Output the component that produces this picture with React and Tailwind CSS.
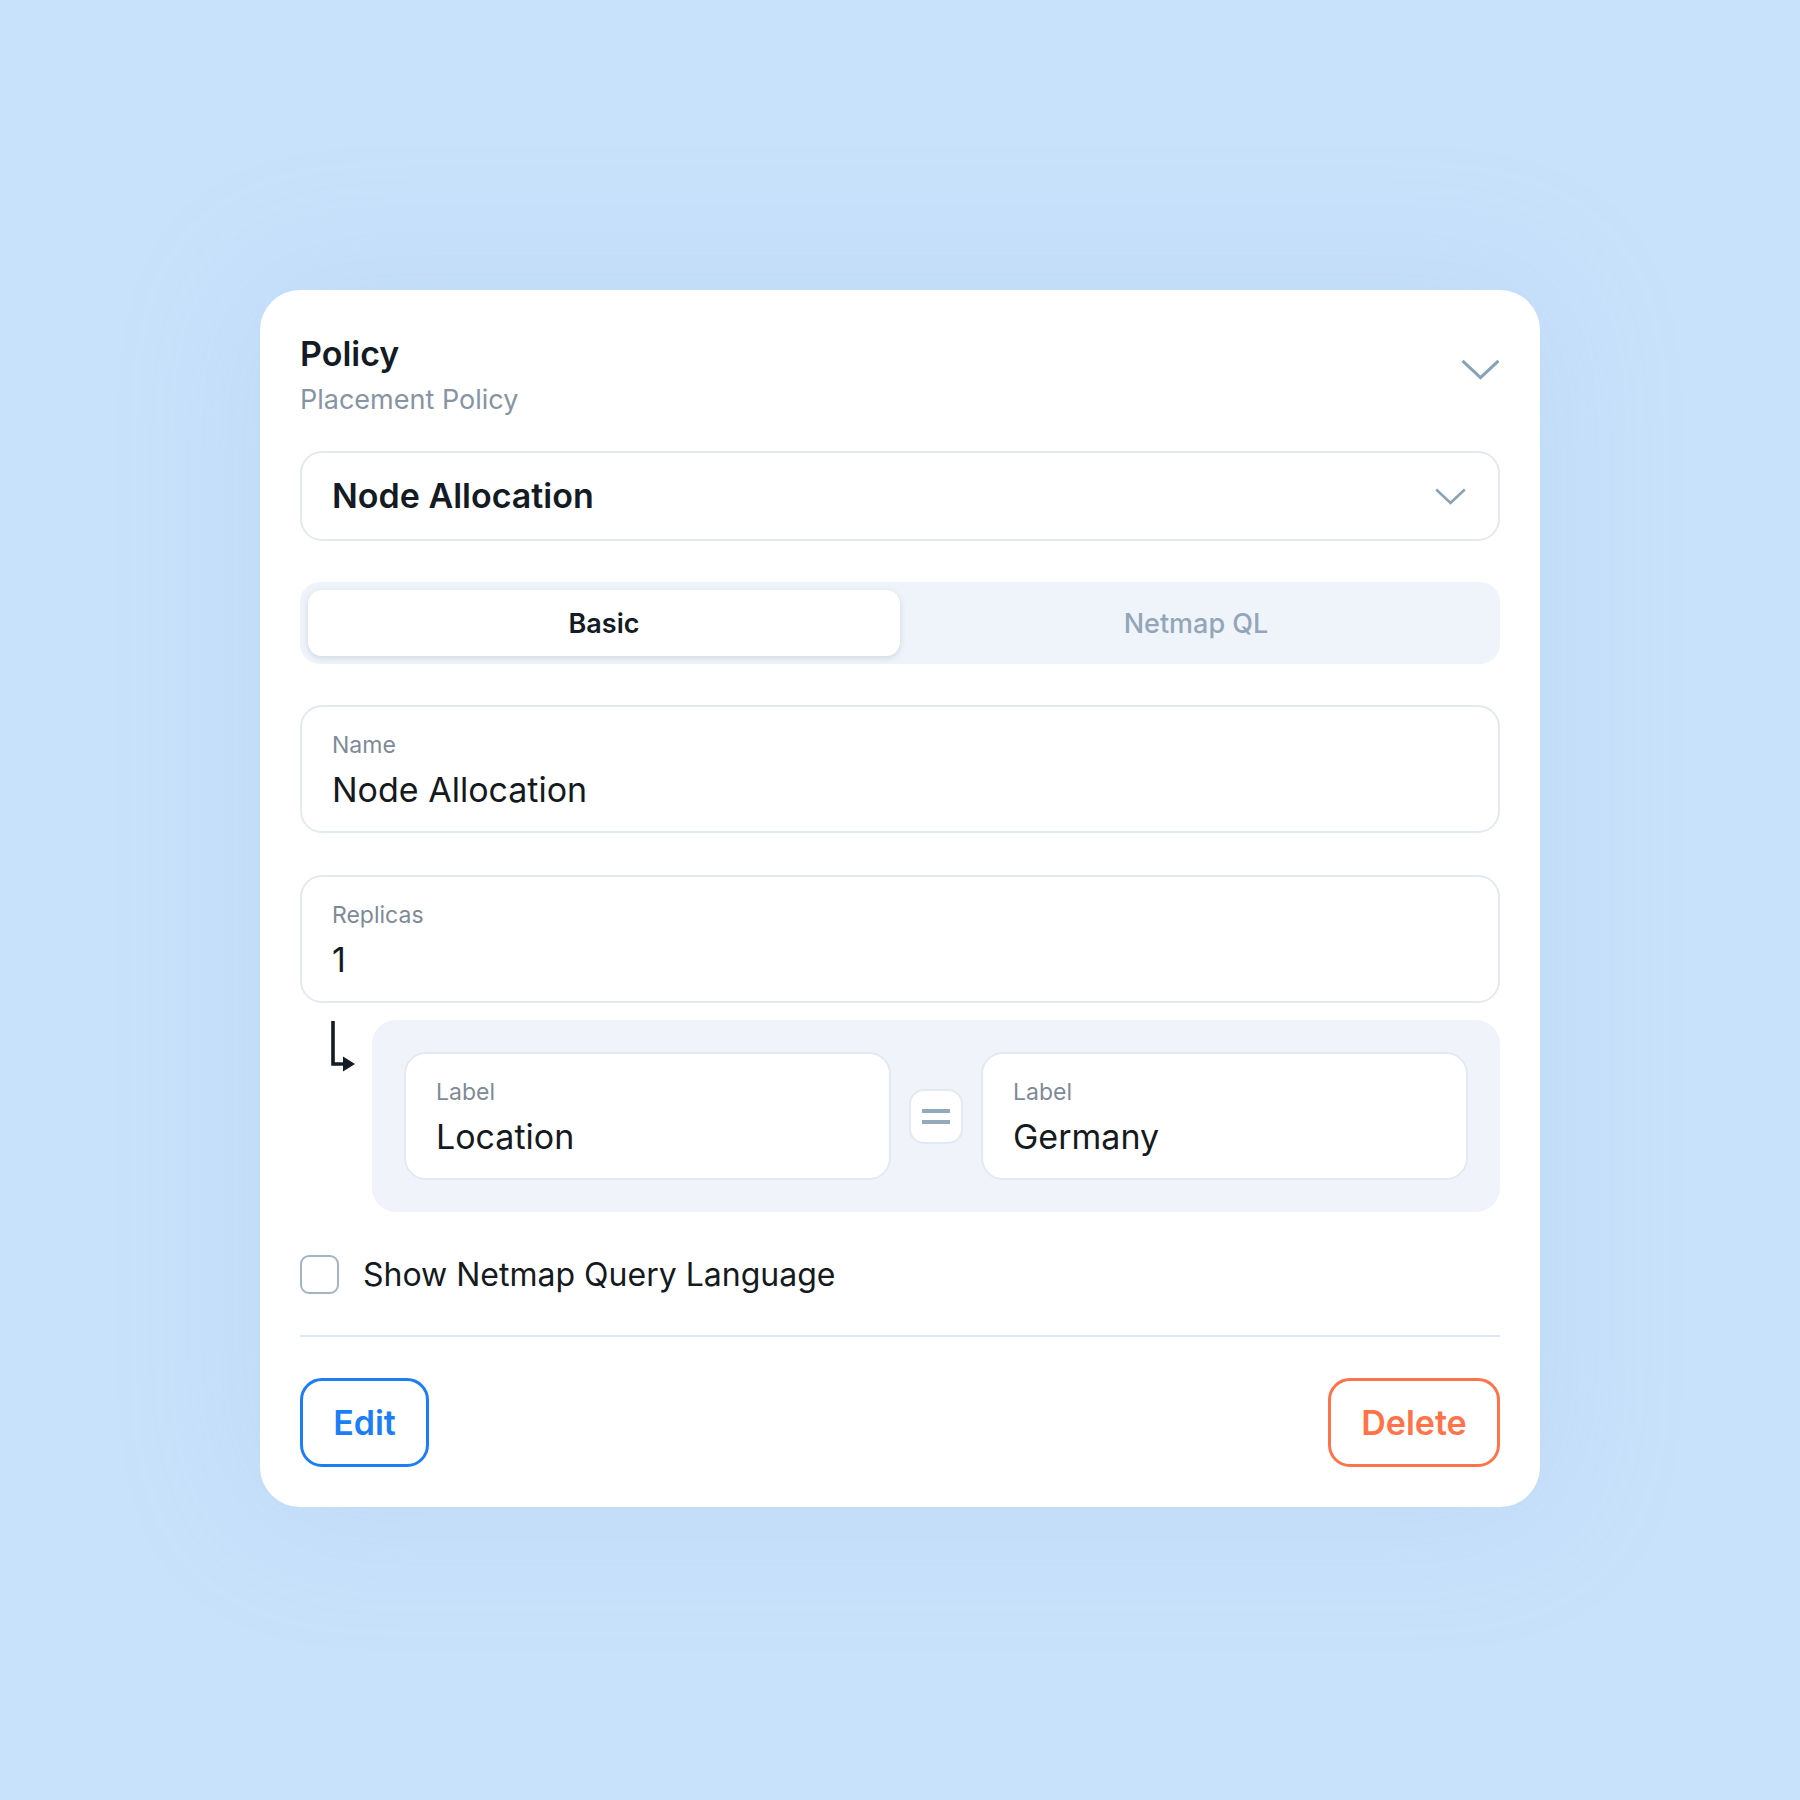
import React from 'react';

// Placement policy editor card
const font = { fontFamily: 'Inter, "Noto Sans", sans-serif' };

function Chevron({ className, strokeWidth = 3 }) {
  return (
    <svg viewBox="0 0 38 20" fill="none" className={className}>
      <polyline
        points="1.5,1.5 19,18 36.5,1.5"
        stroke="currentColor"
        strokeWidth={strokeWidth}
        strokeLinecap="butt"
        strokeLinejoin="miter"
      />
    </svg>
  );
}

function CornerArrow() {
  return (
    <svg width="26" height="52" viewBox="0 0 26 52" fill="none">
      <path d="M3 1 V44 H15" stroke="#141b24" strokeWidth="3.6" />
      <polygon points="13,36.5 25,44 13,51.5" fill="#141b24" />
    </svg>
  );
}

function Field({ label, value, className = '' }) {
  return (
    <div className={`flex flex-col rounded-[22px] border-2 border-[#e2e9f1] bg-white px-[30px] pt-[23px] ${className}`}>
      <span className="text-[23px] leading-[30px] text-[#7e8a97]">{label}</span>
      <span className="mt-[9px] text-[34px] leading-[42px] text-[#151a21]">{value}</span>
    </div>
  );
}

export default function App() {
  return (
    <div style={font} className="flex h-[1800px] w-full items-start justify-center bg-[#c9e2fb] pt-[290px]">
      <div className="flex w-[1280px] flex-col rounded-[40px] bg-white px-10 pt-10 pb-10 shadow-[0_0_140px_20px_rgba(120,160,215,0.12)]">
        {/* header */}
        <div className="flex items-start justify-between">
          <div className="flex flex-col">
            <h1 className="text-[34px] font-semibold leading-[48px] text-[#141b24]">Policy</h1>
            <p className="mt-1 text-[27px] leading-[36px] text-[#8694a3]">Placement Policy</p>
          </div>
          <Chevron className="mt-[29px] h-[21px] w-[39px] text-[#8aa2b6]" />
        </div>

        {/* policy select */}
        <div className="mt-[33px] flex h-[90px] items-center justify-between rounded-[22px] border-2 border-[#e2e9f1] pl-[30px] pr-[32px]">
          <span className="text-[34px] font-semibold leading-[42px] text-[#141b24]">Node Allocation</span>
          <Chevron className="h-[17px] w-[31px] text-[#8aa2b6]" strokeWidth={3.2} />
        </div>

        {/* mode tabs */}
        <div className="mt-[41px] grid h-[82px] grid-cols-2 rounded-[20px] bg-[#eff4fa] p-2">
          <div className="flex items-center justify-center rounded-[14px] bg-white pt-[3px] text-[27px] font-semibold text-[#141b24] shadow-[0_2px_6px_rgba(40,60,90,0.16)]">
            Basic
          </div>
          <div className="flex items-center justify-center pt-[3px] text-[27px] font-medium text-[#93a6b9]">
            Netmap QL
          </div>
        </div>

        <Field label="Name" value="Node Allocation" className="mt-[41px] h-[128px]" />
        <Field label="Replicas" value="1" className="mt-[42px] h-[128px]" />

        {/* selector condition */}
        <div className="mt-[17px] flex">
          <div className="w-[72px] shrink-0 pl-[30px]">
            <CornerArrow />
          </div>
          <div className="flex flex-1 items-center gap-[18px] rounded-[24px] bg-[#f0f4fa] p-8">
            <Field label="Label" value="Location" className="h-[128px] flex-1" />
            <div className="flex h-[55px] w-[54px] shrink-0 flex-col items-center justify-center gap-[7px] rounded-[15px] border-2 border-[#e2e9f1] bg-white">
              <span className="h-[4px] w-[28px] bg-[#93a9bc]" />
              <span className="h-[4px] w-[28px] bg-[#93a9bc]" />
            </div>
            <Field label="Label" value="Germany" className="h-[128px] flex-1" />
          </div>
        </div>

        {/* netmap toggle */}
        <label className="mt-[43px] flex h-[39px] items-center gap-6">
          <span className="h-[39px] w-[39px] shrink-0 rounded-[9px] border-2 border-[#a3b4c6] bg-white" />
          <span className="text-[32px] leading-[39px] text-[#151a21]">Show Netmap Query Language</span>
        </label>

        <div className="mt-[41px] h-[2px] bg-[#dfe9f4]" />

        {/* actions */}
        <div className="mt-[41px] flex items-center justify-between">
          <button className="flex h-[89px] w-[129px] items-center justify-center rounded-[22px] border-[3px] border-[#1c7ef7] text-[34px] font-semibold text-[#1c7ef7]">
            Edit
          </button>
          <button className="flex h-[89px] w-[172px] items-center justify-center rounded-[22px] border-[3px] border-[#ff7349] text-[34px] font-semibold text-[#ff7349]">
            Delete
          </button>
        </div>
      </div>
    </div>
  );
}
